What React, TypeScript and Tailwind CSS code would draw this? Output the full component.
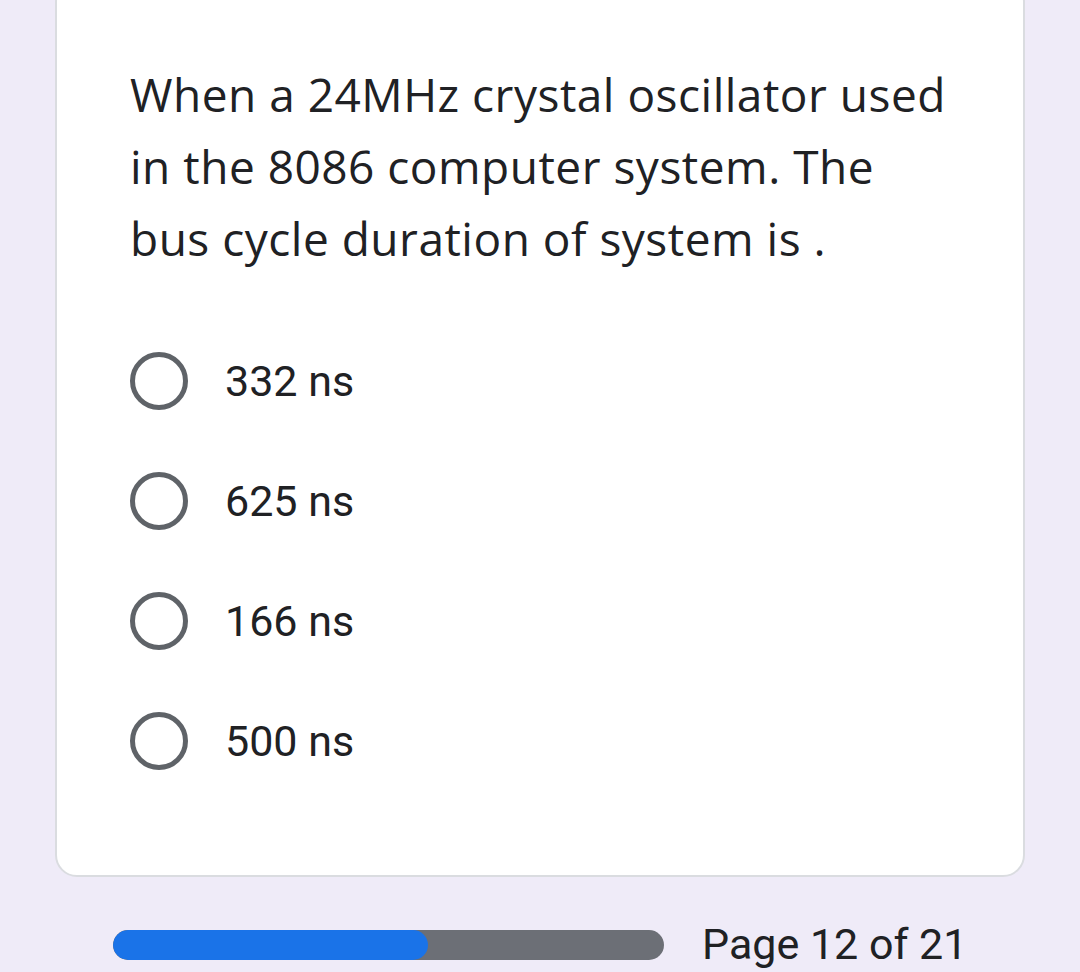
import React from "react";

const options = ["332 ns", "625 ns", "166 ns", "500 ns"];

export default function App() {
  return (
    <div className="w-[1080px] h-[972px] bg-[#efebf8] overflow-hidden flex flex-col">
      <div className="ml-[55px] w-[970px] h-[897px] -mt-[20px] bg-white border-2 border-[#dadce0] rounded-[22px] pt-[76px] pl-[73px]">
        <div className="text-[46px] leading-[72px] tracking-[0.5px] text-[#202124] font-['Open_Sans',sans-serif] w-[826px]">
          When a 24MHz crystal oscillator used in the 8086 computer system. The bus cycle duration of system is .
        </div>
        <div className="mt-[79px] flex flex-col gap-[64px]">
          {options.map((o) => (
            <div key={o} className="flex items-center h-[56px]">
              <div className="w-[58px] h-[58px] rounded-full border-[5px] border-[#5f6368] box-border" />
              <div className="ml-[37px] text-[43px] text-[#202124] font-['Roboto',sans-serif]">{o}</div>
            </div>
          ))}
        </div>
      </div>
      <div className="flex items-center mt-[46px] ml-[113px]">
        <div className="w-[551px] h-[30px] rounded-full bg-[#6c6f76] overflow-hidden">
          <div className="w-[315px] h-full rounded-full bg-[#1a73e8]" />
        </div>
        <div className="ml-[38px] text-[43px] text-[#202124] font-['Roboto',sans-serif] leading-none">Page 12 of 21</div>
      </div>
    </div>
  );
}
